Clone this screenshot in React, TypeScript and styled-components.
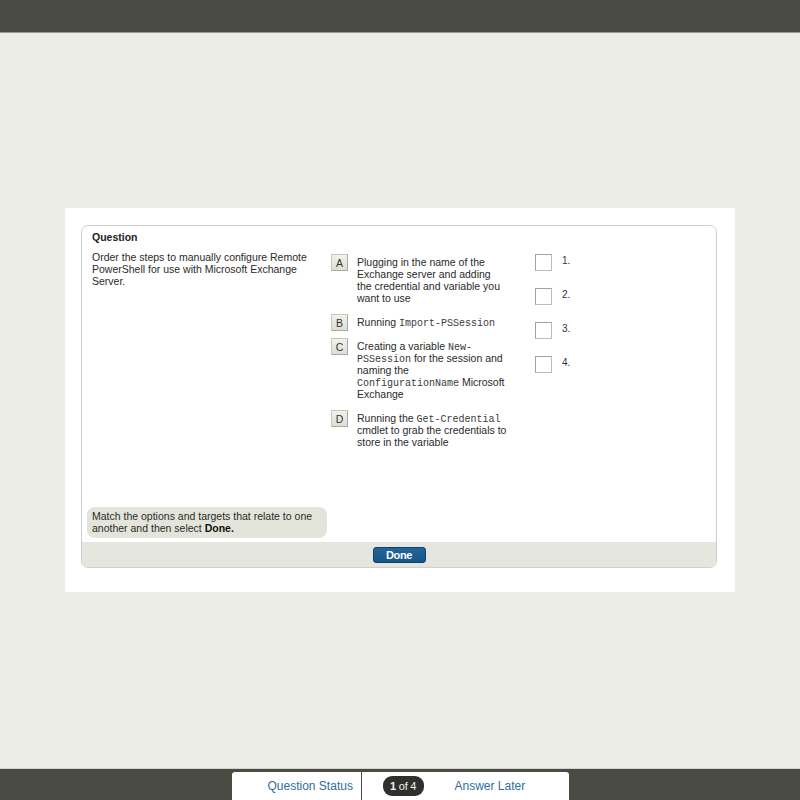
import React from 'react';
import styled, { createGlobalStyle } from 'styled-components';

const GlobalStyle = createGlobalStyle`
    html, body {
        margin: 0;
        padding: 0;
        height: 100%;
    }
    body {
        background: #edede8;
        font-family: "Liberation Sans", Arial, sans-serif;
        color: #2a2a2a;
    }
`;

// inline monospace snippet; zero line-height keeps it from stretching the line box
const Code = styled.code`
    font-family: "Liberation Mono", "Courier New", monospace;
    font-size: 10px;
    line-height: 0;
    color: #3a3a3a;
`;

interface Option {
    letter: string;
    content: React.ReactNode;
}

const options: Option[] = [
    {
        letter: 'A',
        content: <>Plugging in the name of the Exchange server and adding the credential and variable you want to use</>,
    },
    {
        letter: 'B',
        content: <>Running <Code>Import-PSSession</Code></>,
    },
    {
        letter: 'C',
        content: <>Creating a variable <Code>New-PSSession</Code> for the session and naming the <Code>ConfigurationName</Code> Microsoft Exchange</>,
    },
    {
        letter: 'D',
        content: <>Running the <Code>Get-Credential</Code> cmdlet to grab the credentials to store in the variable</>,
    },
];

const targets = [1, 2, 3, 4];

export default function App() {
    return (
        <>
            <GlobalStyle />
            <Page>
                <TopBar />
                <Main>
                    <Panel>
                        <Card>
                            <CardBody>
                                <Heading>Question</Heading>
                                <Columns>
                                    <Prompt>Order the steps to manually configure Remote PowerShell for use with Microsoft Exchange Server.</Prompt>
                                    <OptionList>
                                        {options.map((o) => (
                                            <OptionRow key={o.letter}>
                                                <LetterBadge>{o.letter}</LetterBadge>
                                                <OptionText>{o.content}</OptionText>
                                            </OptionRow>
                                        ))}
                                    </OptionList>
                                    <TargetList>
                                        {targets.map((n) => (
                                            <TargetRow key={n}>
                                                <DropBox />
                                                <TargetLabel>{n}.</TargetLabel>
                                            </TargetRow>
                                        ))}
                                    </TargetList>
                                </Columns>
                                <Hint>Match the options and targets that relate to one another and then select <b>Done.</b></Hint>
                            </CardBody>
                            <CardFooter>
                                <DoneButton type="button">Done</DoneButton>
                            </CardFooter>
                        </Card>
                    </Panel>
                </Main>
                <BottomBar>
                    <NavTab>
                        <StatusLink>Question Status</StatusLink>
                        <NavDivider />
                        <Counter><b>1</b> of 4</Counter>
                        <LaterLink>Answer Later</LaterLink>
                    </NavTab>
                </BottomBar>
            </Page>
        </>
    );
}

const Page = styled.div`
    min-height: 100vh;
    display: flex;
    flex-direction: column;
`;

const TopBar = styled.header`
    height: 32px;
    background: #4a4b42;
    border-bottom: 1px solid #9a9a92;
`;

const Main = styled.main`
    flex: 1;
    display: flex;
    align-items: center;
    justify-content: center;
`;

const Panel = styled.section`
    width: 670px;
    height: 384px;
    margin-bottom: 1px;
    box-sizing: border-box;
    background: #fff;
    padding: 17px 17px 0 16px;
`;

const Card = styled.div`
    width: 636px;
    box-sizing: border-box;
    border: 1px solid #c9d0d7;
    border-radius: 7px;
    overflow: hidden;
    background: #fff;
`;

const CardBody = styled.div`
    height: 316px;
    box-sizing: border-box;
    display: flex;
    flex-direction: column;
    padding: 4px 0 4px 5px;
`;

const Heading = styled.h2`
    margin: 0;
    padding-left: 5px;
    font-size: 10.5px;
    font-weight: bold;
    line-height: 14px;
    color: #222;
`;

const Columns = styled.div`
    flex: 1;
    display: grid;
    grid-template-columns: 244px 204px 1fr;
    margin-top: 7px;
    font-size: 10.5px;
    line-height: 12px;
`;

const Prompt = styled.p`
    margin: 0;
    padding: 0 10px 0 5px;
`;

const OptionList = styled.div`
    display: flex;
    flex-direction: column;
    padding-top: 3px;
`;

const OptionRow = styled.div`
    display: flex;
    align-items: flex-start;
    gap: 9px;
    margin-bottom: 5px;
`;

const LetterBadge = styled.span`
    flex: none;
    width: 17px;
    height: 17px;
    box-sizing: border-box;
    display: flex;
    align-items: center;
    justify-content: center;
    border: 1px solid #c6c8bf;
    border-right-color: #a9aba2;
    border-bottom-color: #a9aba2;
    background: linear-gradient(#f2f3ec, #dcded4);
    font-size: 10.5px;
    color: #333;
`;

const OptionText = styled.span`
    width: 150px;
    padding: 2px 0 5px;
`;

const TargetList = styled.div`
    display: flex;
    flex-direction: column;
    padding-top: 3px;
`;

const TargetRow = styled.div`
    display: flex;
    align-items: flex-start;
    gap: 10px;
    height: 34px;
`;

const DropBox = styled.span`
    width: 17px;
    height: 17px;
    box-sizing: border-box;
    border: 1px solid #b4bcc4;
    border-top-color: #9aa3ac;
    border-left-color: #9aa3ac;
    background: #fff;
`;

const TargetLabel = styled.span`
    margin-top: 2px;
    font-size: 10px;
    line-height: 10px;
    color: #333;
`;

const Hint = styled.p`
    margin: 0;
    width: 240px;
    height: 31px;
    box-sizing: border-box;
    padding: 4px 6px 0 5px;
    border-radius: 8px;
    background: #e3e5db;
    font-size: 10.5px;
    line-height: 11.5px;
    color: #2a2a2a;

    b {
        color: #111;
    }
`;

const CardFooter = styled.div`
    height: 25px;
    display: flex;
    align-items: center;
    justify-content: center;
    background: #e5e6dd;
`;

const DoneButton = styled.button`
    width: 53px;
    height: 16px;
    padding: 0;
    border: 1px solid #123f63;
    border-radius: 3px;
    background: linear-gradient(#22659a, #17568a);
    color: #fff;
    font-family: "Liberation Sans", Arial, sans-serif;
    font-size: 11px;
    font-weight: bold;
    line-height: 14px;
    letter-spacing: -0.4px;
    cursor: pointer;
`;

const BottomBar = styled.footer`
    height: 32px;
    box-sizing: border-box;
    display: flex;
    justify-content: center;
    align-items: flex-end;
    background: #4a4b42;
    border-top: 1px solid #d3d3cc;
`;

const NavTab = styled.nav`
    width: 337px;
    height: 28px;
    display: flex;
    align-items: center;
    background: #fff;
    border-radius: 3px 3px 0 0;
`;

const NavLink = styled.a`
    font-size: 12px;
    color: #2f6da5;
    cursor: pointer;
`;

const StatusLink = styled(NavLink)`
    width: 129px;
    padding-left: 36px;
    box-sizing: border-box;
`;

const LaterLink = styled(NavLink)`
    margin-left: 31px;
`;

const NavDivider = styled.span`
    width: 1px;
    align-self: stretch;
    background: #4a4b42;
`;

const Counter = styled.span`
    margin-left: 21px;
    width: 41px;
    height: 20px;
    display: flex;
    align-items: center;
    justify-content: center;
    gap: 3px;
    border-radius: 9px;
    background: #2f302b;
    color: #f0f0f0;
    font-size: 11px;
    letter-spacing: -0.3px;
`;
